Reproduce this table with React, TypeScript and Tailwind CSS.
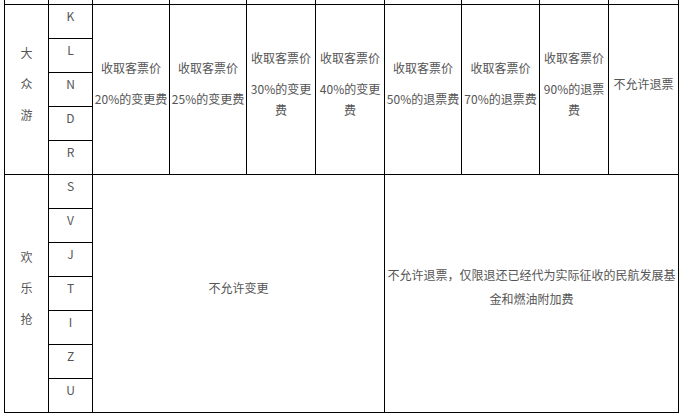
import React from 'react';

const cellBase = 'border border-black align-middle text-center px-px';
const bigCell = `${cellBase} pb-[3px]`;
const p = 'leading-[21px] mb-[10px]';
const letterP = 'leading-[21px] mb-[12px]';

const fares1 = [
  ['收取客票价', '20%的变更费'],
  ['收取客票价', '25%的变更费'],
  ['收取客票价', '30%的变更费'],
  ['收取客票价', '40%的变更费'],
  ['收取客票价', '50%的退票费'],
  ['收取客票价', '70%的退票费'],
  ['收取客票价', '90%的退票费'],
  ['不允许退票'],
];

const group1 = ['K', 'L', 'N', 'D', 'R'];
const group2 = ['S', 'V', 'J', 'T', 'I', 'Z', 'U'];

function Stack({ chars }: { chars: string[] }) {
  return (
    <>
      {chars.map((c) => (
        <p key={c} className={p}>
          {c}
        </p>
      ))}
    </>
  );
}

export default function App() {
  return (
    <div
      className="w-[681px] h-[414px] overflow-hidden bg-white pl-[4px] text-[12px] text-[#555]"
      style={{ fontFamily: '"Noto Sans CJK SC", "Noto Sans", sans-serif' }}
    >
      <table className="table-fixed border-collapse w-[675px] mt-[-20px]">
        <colgroup>
          <col className="w-[44px]" />
          <col className="w-[44px]" />
          <col className="w-[77px]" />
          <col className="w-[77px]" />
          <col className="w-[69px]" />
          <col className="w-[69px]" />
          <col className="w-[77px]" />
          <col className="w-[78px]" />
          <col className="w-[69px]" />
          <col className="w-[70px]" />
        </colgroup>
        <tbody>
          {/* tail of the row above, cut off by the frame */}
          <tr className="h-[24px]">
            {Array.from({ length: 10 }).map((_, i) => (
              <td key={i} className={cellBase} />
            ))}
          </tr>

          {group1.map((letter, i) => (
            <tr key={letter} className="h-[34px]">
              {i === 0 && (
                <td rowSpan={5} className={bigCell}>
                  <Stack chars={['大', '众', '游']} />
                </td>
              )}
              <td className={cellBase}>
                <p className={letterP}>{letter}</p>
              </td>
              {i === 0 &&
                fares1.map((lines, j) => (
                  <td key={j} rowSpan={5} className={bigCell}>
                    {lines.map((l) => (
                      <p key={l} className={p}>
                        {l}
                      </p>
                    ))}
                  </td>
                ))}
            </tr>
          ))}

          {group2.map((letter, i) => (
            <tr key={letter} className="h-[34px]">
              {i === 0 && (
                <td rowSpan={7} className={bigCell}>
                  <Stack chars={['欢', '乐', '抢']} />
                </td>
              )}
              <td className={cellBase}>
                <p className={letterP}>{letter}</p>
              </td>
              {i === 0 && (
                <>
                  <td colSpan={4} rowSpan={7} className={bigCell}>
                    <p className={p}>不允许变更</p>
                  </td>
                  <td colSpan={4} rowSpan={7} className={bigCell}>
                    <p className="leading-[24px] mb-[10px]">
                      不允许退票，仅限退还已经代为实际征收的民航发展基金和燃油附加费
                    </p>
                  </td>
                </>
              )}
            </tr>
          ))}
        </tbody>
      </table>
    </div>
  );
}
